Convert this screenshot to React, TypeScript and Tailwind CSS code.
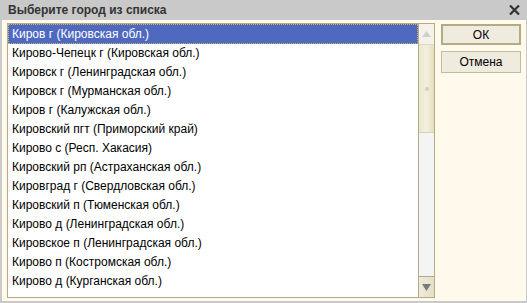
import React from "react";

const cities = [
  "Киров г (Кировская обл.)",
  "Кирово-Чепецк г (Кировская обл.)",
  "Кировск г (Ленинградская обл.)",
  "Кировск г (Мурманская обл.)",
  "Киров г (Калужская обл.)",
  "Кировский пгт (Приморский край)",
  "Кирово с (Респ. Хакасия)",
  "Кировский рп (Астраханская обл.)",
  "Кировград г (Свердловская обл.)",
  "Кировский п (Тюменская обл.)",
  "Кирово д (Ленинградская обл.)",
  "Кировское п (Ленинградская обл.)",
  "Кирово п (Костромская обл.)",
  "Кирово д (Курганская обл.)",
];

const CityDialog: React.FC = () => {
  const selected = 0;

  return (
    <div
      className="w-[527px] h-[303px] flex flex-col bg-[#c9c9c9] overflow-hidden"
      style={{ fontFamily: '"Liberation Sans", Arial, sans-serif' }}
    >
      {/* title bar */}
      <div className="h-[20px] flex items-center justify-between pl-[8px] pr-[7px] shrink-0">
        <span className="text-[12px] font-bold text-[#333333] leading-none">
          Выберите город из списка
        </span>
        <svg width="11" height="10" viewBox="0 0 11 10">
          <path d="M1 0.5 L10 9.5 M10 0.5 L1 9.5" stroke="#333" strokeWidth="2.2" />
        </svg>
      </div>

      <div className="flex-1 ml-[2px] mr-[1px] mb-[2px] bg-[#fffaeb] flex pt-[3px] pl-[5px]">
        {/* list */}
        <div className="w-[428px] h-[275px] border border-[#b3ab86] bg-white flex">
          <div className="flex-1 flex flex-col">
            {cities.map((c, i) => (
              <div
                key={c}
                className={
                  i === selected
                    ? "h-[20px] flex items-center pl-[3px] text-[12px] text-white bg-[#4f69c1] border border-dotted border-[#c8b96a] mb-[-1px]"
                    : "h-[19px] flex items-center pl-[4px] text-[12px] text-black"
                }
              >
                {c}
              </div>
            ))}
          </div>
          {/* scrollbar */}
          <div className="w-[16px] flex flex-col bg-[#f4f4f4] border-l border-[#b3ab86]">
            <div className="h-[21px] flex items-center justify-center border-b border-[#ddd9c6] bg-[#f4f2ea]">
              <svg width="9" height="6" viewBox="0 0 9 6">
                <path d="M4.5 0 L9 6 L0 6 Z" fill="#d0d0d0" />
              </svg>
            </div>
            <div className="h-[88px] flex items-center justify-center bg-gradient-to-r from-[#ece7cc] via-[#f3efdc] to-[#e6dfbd] border-b border-[#d8d2b4]">
              <div className="w-[4px] h-[4px] rounded-full bg-[#d2cdb8]" />
            </div>
            <div className="flex-1" />
            <div className="h-[21px] flex items-center justify-center border-t border-[#b3ab86] bg-gradient-to-r from-[#efeadb] to-[#e6e0c8]">
              <svg width="9" height="7" viewBox="0 0 9 7">
                <path d="M0 0 L9 0 L4.5 7 Z" fill="#7a7a7a" />
              </svg>
            </div>
          </div>
        </div>

        {/* buttons */}
        <div className="ml-[6px] flex flex-col gap-[6px] pt-[1px]">
          <button className="w-[80px] h-[21px] border-2 border-[#b3ab86] bg-[#efebdf] text-[12px] text-black flex items-center justify-center">
            ОК
          </button>
          <button className="w-[80px] h-[22px] border border-[#c2bb9c] bg-[#efebdf] text-[12px] text-black flex items-center justify-center">
            Отмена
          </button>
        </div>
      </div>
    </div>
  );
};

export default CityDialog;
